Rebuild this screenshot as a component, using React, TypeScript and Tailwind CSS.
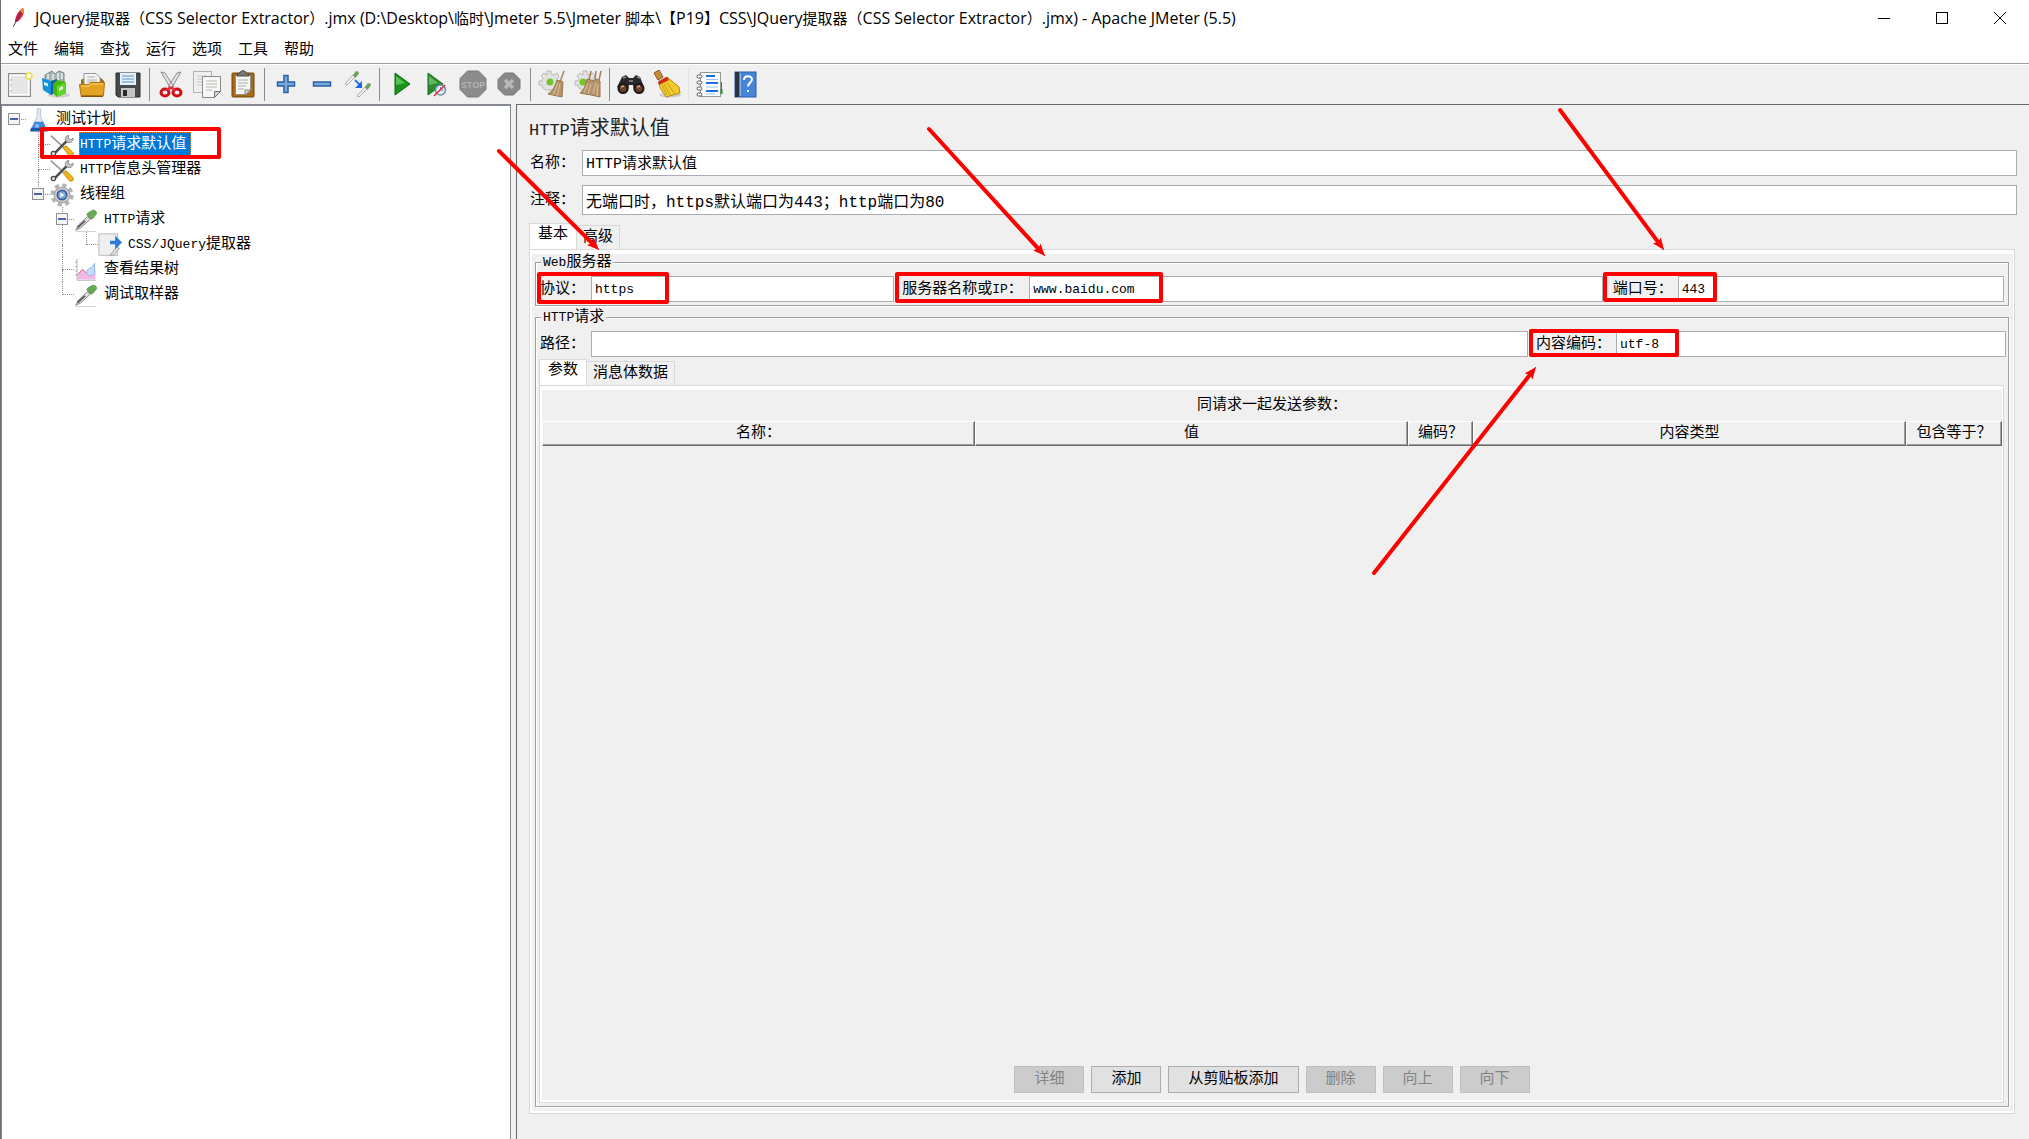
import { useState, type ReactNode } from "react";
import clsx from "clsx";

// Latin runs get their own size beside the CJK glyphs around them
function Mixed({ text, latin = "text-[13px]" }: { text: string; latin?: string }) {
  return (
    <>
      {text.split(/([ -~]+)/).map((part, i) =>
        /^[ -~]+$/.test(part) ? (
          <span key={i} className={latin}>
            {part}
          </span>
        ) : (
          part
        )
      )}
    </>
  );
}

function Icon({ children, size = 28 }: { children: ReactNode; size?: number }) {
  return (
    <svg width={size} height={size} viewBox="0 0 28 28" fill="none" aria-hidden="true" className="shrink-0">
      {children}
    </svg>
  );
}

const NewIcon = () => (
  <Icon>
    <rect x="2.5" y="3.5" width="22" height="23" fill="#e6e6e6" stroke="#8c8c84" />
    <rect x="4.500" y="5.500" width="18" height="19" stroke="#fff" />
    <path d="M5 9v2M5 14v2M5 20v2" stroke="#aaa" />
    <circle cx="23" cy="6" r="3" fill="#fffbe0" stroke="#f0dc50" strokeWidth="1.500" />
  </Icon>
);

const TemplatesIcon = () => (
  <Icon>
    <ellipse cx="17" cy="25" rx="11" ry="2.500" fill="#000" opacity=".15" />
    <path d="M3 5l7-4 3 3 4-3 5 2v9H3z" fill="#aab4b6" stroke="#7c8688" />
    <path d="M6 4v5M11 4v6M16 3v7M20 3v6" stroke="#e6ecec" strokeWidth="1.500" />
    <path d="M0 8l9 3v14l-8-5z" fill="#1790d8" />
    <path d="M9 11l6-2v12l-6 4z" fill="#0a62a8" />
    <path d="M2 12l4 1.500v3L2 15z" fill="#d9f0ff" />
    <path d="M11 14l4-4 9 2v11l-9 4-4-4z" fill="#44b512" />
    <path d="M15 16l9-4v11l-9 4z" fill="#62d321" />
    <path d="M17 18l4-2v3l-4 2z" fill="#e3ffd0" />
  </Icon>
);

const OpenIcon = () => (
  <Icon>
    <path d="M3 10l3-2h17l3 3v14H3z" fill="#a3690b" />
    <path d="M6 3.500h12l4 4V17H6z" fill="#f5f5f5" stroke="#999" />
    <path d="M9 7h8M9 10h10M9 12h10" stroke="#aaa" />
    <path d="M1.500 14.500h9l2-2h14l-1 13H3z" fill="#e2a422" stroke="#b17510" />
    <path d="M3 16h8l2-2h12" stroke="#f8d170" />
    <path d="M3 26.500h22" stroke="#815407" />
  </Icon>
);

const SaveIcon = () => (
  <Icon>
    <path d="M2 3h24v24H4l-2-2z" fill="#48494c" stroke="#2c2c2e" />
    <rect x="6" y="3" width="16" height="12" fill="#e6f0f8" />
    <path d="M8 6h12M8 9h12M8 12h12" stroke="#86b1d6" strokeWidth="1.500" />
    <rect x="7" y="18" width="14" height="9" fill="#c4c4c4" />
    <rect x="9" y="20" width="4" height="6" fill="#27272a" />
  </Icon>
);

const CutIcon = () => (
  <Icon>
    <path d="M4 2l4 1 9 14-3 2zM24 2l-4 1-9 14 3 2z" fill="#e2e2e2" stroke="#8d8d8d" />
    <ellipse cx="8" cy="22.500" rx="4" ry="3.500" stroke="#d01018" strokeWidth="3" />
    <ellipse cx="20" cy="22.500" rx="4" ry="3.500" stroke="#d01018" strokeWidth="3" />
    <path d="M9 19l5-3 5 3-2 2-3-2-3 2z" fill="#e4333a" />
  </Icon>
);

const CopyIcon = () => (
  <Icon>
    <path d="M.5 1.500h18v21H.5z" fill="#efefef" stroke="#b0b0b0" />
    <path d="M4 6h10M4 9h6M4 12h6M4 15h6" stroke="#c6c6c6" />
    <path d="M9.500 6.500h18v15l-6 6h-12z" fill="#f7f7f5" stroke="#8b8b88" />
    <path d="M13 11h11M13 14h11M13 17h11M13 20h6" stroke="#b9b9b9" />
    <path d="M21.500 27.500v-6h6z" fill="#d2d2ce" stroke="#777" />
  </Icon>
);

const PasteIcon = () => (
  <Icon>
    <rect x="3" y="3" width="22" height="24" rx="1" fill="#a96812" stroke="#764606" />
    <path d="M6.500 5.500h15v14l-4 5h-11z" fill="#f6f6f4" stroke="#8f8f8c" />
    <path d="M9 10h10M9 13h10M9 16h8M9 19h6" stroke="#aaa" />
    <path d="M16 25v-5h6z" fill="#d3d3d0" stroke="#888" />
    <path d="M8 6V4l3-1c0-3 6-3 6 0l3 1v2z" fill="#777772" stroke="#474743" />
  </Icon>
);

const PlusIcon = () => (
  <Icon>
    <path d="M12 5.500h4v6.500h6.500v4H16v6.500h-4V16H5.500v-4H12z" fill="#76a9dc" stroke="#2b5fa3" strokeWidth="1.500" />
  </Icon>
);

const MinusIcon = () => (
  <Icon>
    <rect x="5.500" y="12" width="17" height="4" fill="#76a9dc" stroke="#2b5fa3" strokeWidth="1.500" />
  </Icon>
);

const ToggleIcon = () => (
  <Icon>
    <path d="M1 14l8-9 2 2-8 8z" fill="#f4f4f4" stroke="#aaa" />
    <path d="M9 5l3-4 3 1-1 3-3 3z" fill="#6aa257" />
    <path d="M13 26l8-9 2 2-8 8z" fill="#f4f4f4" stroke="#aaa" />
    <path d="M21 17l3-4 3 1-1 3-3 3z" fill="#6aa257" />
    <path d="M11 10l5 5" stroke="#2a7bea" strokeWidth="2" />
    <path d="M18 11v7h-7z" fill="#1769e0" />
  </Icon>
);

const StartIcon = () => (
  <Icon>
    <path d="M8 3l15 11L8 25z" fill="#15951b" stroke="#0a6b10" />
    <path d="M9 6l9 7-9 2z" fill="#54c254" />
  </Icon>
);

const StartNoTimersIcon = () => (
  <Icon>
    <path d="M5 3l15 11L5 25z" fill="#2d8a30" stroke="#176e1c" />
    <path d="M6 6l9 7-9 2z" fill="#65b765" />
    <circle cx="17.500" cy="20" r="5" fill="#e6eef8" stroke="#6a8db8" strokeWidth="1.500" />
    <path d="M17.500 17v3h3" stroke="#6a8db8" />
    <path d="M11 26l11-11" stroke="#e02a2a" strokeWidth="1.500" />
  </Icon>
);

const StopIcon = () => (
  <Icon>
    <path d="M8.500 1h11L27 8.500v11L19.500 27h-11L1 19.500v-11z" fill="#8c8c8c" stroke="#7b7b7b" />
    <text x="14" y="18" textAnchor="middle" fontSize="9" fontWeight="700" fill="#b4b4b4" stroke="none" fontFamily="Liberation Sans, sans-serif">
      STOP
    </text>
  </Icon>
);

const ShutdownIcon = () => (
  <Icon>
    <path d="M9.500 3h9l6.500 6.500v9L18.500 25h-9L3 18.500v-9z" fill="#888" stroke="#777" />
    <path d="M10 10l8 8M18 10l-8 8" stroke="#b9b9b9" strokeWidth="3.500" />
  </Icon>
);

const gearTeeth = "M9 1h4v3l3 1 3-2 2 3-2 3 1 2h3v4h-3l-1 3-3 2H8l-3-2-1-3H1v-4h3l1-3-2-2 3-3 3 2z";

const ClearIcon = () => (
  <Icon>
    <path d={gearTeeth} fill="#e2e2e2" stroke="#b9b9b9" />
    <circle cx="12" cy="12" r="3.500" fill="#74c42e" />
    <path d="M26 1l-4 11" stroke="#a1805c" strokeWidth="1.500" />
    <path d="M19 10l6 2-1 15-14-3c5-3 7-8 9-14z" fill="#b6946b" stroke="#96754e" />
    <path d="M20 13l-5 12M22 14l-3 12" stroke="#dcc19a" />
  </Icon>
);

const ClearAllIcon = () => (
  <Icon>
    <path d={gearTeeth} fill="#e2e2e2" stroke="#b9b9b9" />
    <circle cx="9" cy="12" r="3.500" fill="#74c42e" />
    <path d="M17 1l-2 9M22 1l-1 9M27 1l-2 9" stroke="#a1805c" strokeWidth="1.500" />
    <path d="M13 9l4 1 3 1 3-2 3 2v16l-9-2-11-2c4-3 6-8 7-14z" fill="#b6946b" stroke="#96754e" />
    <path d="M14 13l-4 10M17 14l-3 10M22 13l-3 11M24 14l-1 12" stroke="#dcc19a" />
  </Icon>
);

const SearchIcon = () => (
  <Icon>
    <path d="M5 7l4-2 3 3h4l3-3 4 2 4 10-5 4h-5l-1-6h-4l-1 6H6l-6-4z" fill="#29292c" />
    <path d="M6 8l3-1M20 7l3 1" stroke="#8a8a8e" strokeWidth="1.500" />
    <circle cx="6" cy="18.500" r="4.500" fill="#6b3f29" stroke="#1a1a1c" strokeWidth="2" />
    <circle cx="22" cy="18.500" r="4.500" fill="#6b3f29" stroke="#1a1a1c" strokeWidth="2" />
    <path d="M4 17l3-1M20 17l3-1" stroke="#d7a583" strokeWidth="1.500" />
    <path d="M12 11h4" stroke="#77777a" strokeWidth="2" />
  </Icon>
);

const BroomIcon = () => (
  <Icon>
    <ellipse cx="17" cy="25" rx="11" ry="2.500" fill="#000" opacity=".15" />
    <path d="M1 3l5-3 4 7-5 3z" fill="#c88a3c" stroke="#8c571a" />
    <path d="M6 11l8-4 12 10 1 6-14 4c-2-5-7-7-7-16z" fill="#f3cb2c" stroke="#b88a10" />
    <path d="M11 14l6 11M14 13l8 11M9 15l5 10" stroke="#c79a14" />
    <path d="M5 12l9-5 2 3-10 5z" fill="#d3261f" />
  </Icon>
);

const LogIcon = () => (
  <Icon>
    <rect x="4.500" y="2.500" width="20" height="24" fill="#fff" stroke="#999" />
    <path d="M25.500 12v7" stroke="#2762c7" />
    <path d="M25.500 19v5" stroke="#31912f" strokeWidth="2" />
    <path d="M10 6h9M10 13h12M10 21h12" stroke="#1b6bea" strokeWidth="2" />
    <path d="M10 9.500h12M10 17h12M10 24h9" stroke="#9cc1f3" />
    {[6, 12, 18, 24].map((y) => (
      <rect key={y} x="1" y={y - 1} width="5" height="3" rx="1.500" fill="#fff" stroke="#555" />
    ))}
  </Icon>
);

const HelpIcon = () => (
  <Icon>
    <rect x="3" y="2" width="21" height="25" fill="#4684d8" stroke="#2a5ca8" />
    <rect x="3" y="2" width="4" height="25" fill="#2c3440" />
    <path d="M8.500 3v23" stroke="#8ab6ee" />
    <path d="M12 10c0-5 8-5 8-.5 0 3-4 3-4 7" stroke="#fff" strokeWidth="2" />
    <rect x="15" y="20" width="2" height="2" fill="#fff" />
  </Icon>
);

const FlaskIcon = () => (
  <Icon size={24}>
    <path d="M13 1h4v9l8 17H5l8-17z" fill="#e3e9ee" stroke="#b5bec6" />
    <path d="M10 16h10l5 11H5z" fill="#3b8ade" />
    <path d="M6 23h18l1 4H5z" fill="#165ba9" />
    <path d="M11 19h4v4h-4z" fill="#8cc0f4" />
  </Icon>
);

const ToolsIcon = () => (
  <Icon size={24}>
    <path d="M1 3l14 13" stroke="#9a9a9a" strokeWidth="2" />
    <path d="M15 17l4-2 8 8c1 4-2 5-5 3z" fill="#f0b51c" stroke="#bb8508" />
    <path d="M5 24L20 9" stroke="#4e4e4e" strokeWidth="3" />
    <path d="M18 9c-1-4 1-6 4-6l-1 3 3 2 3-2c0 4-3 6-6 5z" fill="#c7c7c7" stroke="#7d7d7d" />
    <circle cx="4" cy="24" r="2.500" fill="#e0e0e0" stroke="#4b4b4b" strokeWidth="1.500" />
  </Icon>
);

const GearIcon = () => (
  <Icon size={24}>
    <circle cx="14" cy="14" r="11.500" stroke="#b4b4b4" strokeWidth="4" strokeDasharray="5 4.030" />
    <circle cx="14" cy="14" r="9" fill="#d8d8d8" stroke="#adadad" strokeWidth="2" />
    <circle cx="14" cy="14" r="5.500" fill="#7ea6d6" stroke="#3c629c" strokeWidth="2" />
    <path d="M12 11l5 3-5 3z" fill="#fff" />
  </Icon>
);

const DropperIcon = () => (
  <Icon size={24}>
    <path d="M2 27.500h24" stroke="#c9c9c9" />
    <path d="M2 26l3-6L16 10l3 3L8 23z" fill="#dedede" stroke="#777" />
    <path d="M4 23l9-8" stroke="#555" strokeWidth="2" />
    <path d="M15 8l5 5 2-1 4-5c1-4-3-5-5-4l-5 3z" fill="#69a855" stroke="#5a9649" />
  </Icon>
);

const ExtractorIcon = () => (
  <Icon size={24}>
    <rect x="1" y="1" width="22" height="25" fill="#efefef" stroke="#b5b5b5" />
    <path d="M14 26l8-10 3 2-7 8z" fill="#e0e0e0" stroke="#999" />
    <path d="M14 9h6V3l8 8-8 8v-6h-6z" fill="#2d7bd3" />
  </Icon>
);

const GraphIcon = () => (
  <Icon size={24}>
    <path d="M3.500 1v25h22" stroke="#aaa" />
    <path d="M1 5h3M1 10h3M1 15h3M1 20h3" stroke="#aaa" />
    <path d="M4 20l6-7 6 6 9-6v12H4z" fill="#f2b7e2" />
    <path d="M4 20l6-7 6 6" stroke="#c24b74" />
    <path d="M15 18c-1-5 3-6 6-7l3-5v12c-3 3-7 4-9 0z" fill="#c5dcf7" stroke="#8ab2e2" />
  </Icon>
);

const FeatherIcon = () => (
  <svg width="12" height="20" viewBox="0 0 12 20" aria-hidden="true">
    <path d="M2 14C2 8 6 2 10 0c2 4 0 10-6 14z" fill="#cf2340" />
    <path d="M7 3c1-2 2-3 3-3 1 2 1 4 0 6z" fill="#f28a1c" />
    <path d="M8 4L0 19" stroke="#6c2370" />
  </svg>
);

const toolbar = [
  [
    { label: "新建", icon: <NewIcon /> },
    { label: "模板", icon: <TemplatesIcon /> },
    { label: "打开", icon: <OpenIcon /> },
    { label: "保存", icon: <SaveIcon /> },
  ],
  [
    { label: "剪切", icon: <CutIcon /> },
    { label: "复制", icon: <CopyIcon /> },
    { label: "粘贴", icon: <PasteIcon /> },
  ],
  [
    { label: "全部展开", icon: <PlusIcon /> },
    { label: "全部折叠", icon: <MinusIcon /> },
    { label: "切换", icon: <ToggleIcon /> },
  ],
  [
    { label: "启动", icon: <StartIcon /> },
    { label: "不停顿开始", icon: <StartNoTimersIcon /> },
    { label: "停止", icon: <StopIcon /> },
    { label: "关闭", icon: <ShutdownIcon /> },
  ],
  [
    { label: "清除", icon: <ClearIcon /> },
    { label: "清除全部", icon: <ClearAllIcon /> },
  ],
  [
    { label: "查找", icon: <SearchIcon /> },
    { label: "重置搜索", icon: <BroomIcon /> },
  ],
  [
    { label: "函数助手", icon: <LogIcon /> },
    { label: "帮助", icon: <HelpIcon /> },
  ],
];

type Guide = "blank" | "pipe" | "tee" | "ell" | "root" | "last" | "node";

const tree: { label: string; icon: ReactNode; guides: Guide[] }[] = [
  { label: "测试计划", icon: <FlaskIcon />, guides: ["root"] },
  { label: "HTTP请求默认值", icon: <ToolsIcon />, guides: ["blank", "tee"] },
  { label: "HTTP信息头管理器", icon: <ToolsIcon />, guides: ["blank", "tee"] },
  { label: "线程组", icon: <GearIcon />, guides: ["blank", "last"] },
  { label: "HTTP请求", icon: <DropperIcon />, guides: ["blank", "blank", "node"] },
  { label: "CSS/JQuery提取器", icon: <ExtractorIcon />, guides: ["blank", "blank", "pipe", "ell"] },
  { label: "查看结果树", icon: <GraphIcon />, guides: ["blank", "blank", "tee"] },
  { label: "调试取样器", icon: <DropperIcon />, guides: ["blank", "blank", "ell"] },
];

function GuideCell({ type }: { type: Guide }) {
  const up = type !== "blank" && type !== "root";
  const down = type === "pipe" || type === "tee" || type === "node";
  const across = type !== "blank" && type !== "pipe";
  const handle = type === "root" || type === "last" || type === "node";
  return (
    <span className="relative flex w-6 self-stretch pl-3">
      <span className="flex flex-1 flex-col">
        <span className={clsx("h-[13px] border-dotted border-[#909090]", up && "border-l", across && "border-b")} />
        <span className={clsx("flex-1 border-dotted border-[#909090]", down && "border-l")} />
      </span>
      {handle && (
        <button
          aria-label="折叠"
          className="absolute left-1.5 top-1.5 flex h-3 w-3 items-center justify-center border border-[#919191] bg-[#f4f4f4]"
        >
          <span className="h-0.5 w-2 bg-[#4b63a7]" />
        </button>
      )}
    </span>
  );
}

function TestPlanTree() {
  const [selected, setSelected] = useState("HTTP请求默认值");
  return (
    <nav className="w-[510px] shrink-0 border-x border-t-2 border-[#828790] bg-white pt-px">
      <ul>
        {tree.map(({ label, icon, guides }, i) => (
          <li key={i} className="flex h-[25px] items-center">
            {guides.map((g, n) => (
              <GuideCell key={n} type={g} />
            ))}
            {icon}
            <button
              onClick={() => setSelected(label)}
              className={clsx(
                "ml-[5px] h-[25px] whitespace-nowrap border border-dotted pr-1 leading-[23px]",
                label === selected ? "border-[#ff8728] bg-[#0078d7] text-white" : "border-transparent"
              )}
            >
              <Mixed text={label} />
            </button>
          </li>
        ))}
      </ul>
    </nav>
  );
}

function Field({
  id,
  label,
  value = "",
  className,
  labelClass,
  inputClass = "h-[26px] text-[13px]",
}: {
  id: string;
  label: string;
  value?: string;
  className?: string;
  labelClass?: string;
  inputClass?: string;
}) {
  return (
    <div className={clsx("flex items-center", className)}>
      <label htmlFor={id} className={clsx("shrink-0 whitespace-nowrap pt-0.5", labelClass)}>
        <Mixed text={label} />
      </label>
      <input
        id={id}
        defaultValue={value}
        className={clsx("w-0 min-w-0 flex-1 border border-[#abadb3] bg-white pl-[3px] outline-none", inputClass)}
      />
    </div>
  );
}

function Tabs({ tabs, children, className }: { tabs: string[]; children: ReactNode; className?: string }) {
  const [active, setActive] = useState(tabs[0]);
  return (
    <div className={clsx("flex flex-col", className)}>
      <div role="tablist" className="flex items-end">
        {tabs.map((tab) => (
          <button
            key={tab}
            role="tab"
            aria-selected={tab === active}
            onClick={() => setActive(tab)}
            className={clsx(
              "border border-b-0 border-[#d9d9d9]",
              tab === active ? "-mb-px h-[27px] bg-white px-2 pb-1 leading-[22px]" : "h-6 border-l-0 bg-[#f0f0f0] px-[6px] leading-[22px]"
            )}
          >
            {tab}
          </button>
        ))}
      </div>
      <div className="flex flex-1 flex-col border border-[#d9d9d9] bg-white pb-0.5 pl-0.5 pr-px pt-1">
        <div className="flex flex-1 flex-col bg-[#f0f0f0]">{children}</div>
      </div>
    </div>
  );
}

function Group({ title, children, className }: { title: string; children: ReactNode; className?: string }) {
  return (
    <fieldset
      className={clsx(
        "min-w-0 border border-[#a0a0a0] pb-[3px] pt-[5px] shadow-[1px_1px_0_#fff,inset_1px_1px_0_#fff]",
        className
      )}
    >
      <legend className="ml-[5px] bg-[#f0f0f0] px-0.5 pt-px leading-4">
        <Mixed text={title} />
      </legend>
      {children}
    </fieldset>
  );
}

const columns = [
  { label: "名称：" },
  { label: "值" },
  { label: "编码？", width: "w-[65px]" },
  { label: "内容类型" },
  { label: "包含等于？", width: "w-[96px]" },
];

const actions = [
  { label: "详细", disabled: true },
  { label: "添加", disabled: false },
  { label: "从剪贴板添加", disabled: false },
  { label: "删除", disabled: true },
  { label: "向上", disabled: true },
  { label: "向下", disabled: true },
];

function ParameterTable() {
  return (
    <>
      <p className="pb-1 pt-[5px] text-center leading-[22px]">同请求一起发送参数：</p>
      <table className="w-full table-fixed border-separate border-spacing-0">
        <thead>
          <tr>
            {columns.map(({ label, width }) => (
              <th
                key={label}
                className={clsx(
                  "h-[25px] whitespace-nowrap border-b border-l border-r border-t border-b-[#696969] border-l-white border-r-[#696969] border-t-white p-0 text-center font-normal leading-[22px] shadow-[inset_-1px_-1px_0_#a0a0a0]",
                  width
                )}
              >
                {label}
              </th>
            ))}
          </tr>
        </thead>
      </table>
      <div className="mt-auto flex justify-center gap-[7px] pb-[7px]">
        {actions.map(({ label, disabled }) => (
          <button
            key={label}
            disabled={disabled}
            className="h-[27px] border border-[#adadad] bg-[#e1e1e1] px-[19px] leading-6 disabled:border-[#bfbfbf] disabled:bg-[#cccccc] disabled:text-[#838383]"
          >
            {label}
          </button>
        ))}
      </div>
    </>
  );
}

const highlights = [
  { x: 41, y: 129, w: 177, h: 28 },
  { x: 538, y: 274, w: 128, h: 28 },
  { x: 896, y: 274, w: 264, h: 27 },
  { x: 1604, y: 274, w: 110, h: 26 },
  { x: 1530, y: 331, w: 146, h: 24 },
];

const arrows = [
  { from: [498, 151], to: [598, 250] },
  { from: [928, 129], to: [1044, 256] },
  { from: [1559, 110], to: [1663, 250] },
  { from: [1373, 573], to: [1535, 367] },
];

// Red marks drawn over the window
function Annotations() {
  return (
    <svg className="pointer-events-none absolute left-0 top-0 h-full w-full" stroke="#fe0000" strokeWidth="4" fill="none" aria-hidden="true">
      <defs>
        <marker id="head" markerUnits="userSpaceOnUse" markerWidth="14" markerHeight="12" refX="12" refY="5" orient="auto">
          <path d="M0 0l12 5-12 5 2-5z" fill="#fe0000" stroke="none" />
        </marker>
      </defs>
      {highlights.map(({ x, y, w, h }) => (
        <rect key={x} x={x} y={y} width={w} height={h} strokeLinejoin="round" />
      ))}
      {arrows.map(({ from, to }) => {
        const len = Math.hypot(to[0] - from[0], to[1] - from[1]);
        const t = (len - 8) / len;
        return (
          <g key={from[0]}>
            <line
              x1={from[0]}
              y1={from[1]}
              x2={from[0] + (to[0] - from[0]) * t}
              y2={from[1] + (to[1] - from[1]) * t}
              strokeLinecap="round"
            />
            <line x1={from[0]} y1={from[1]} x2={to[0]} y2={to[1]} strokeWidth="1" markerEnd="url(#head)" />
          </g>
        );
      })}
    </svg>
  );
}

const title =
  "JQuery提取器（CSS Selector Extractor）.jmx (D:\\Desktop\\临时\\Jmeter 5.5\\Jmeter 脚本\\【P19】CSS\\JQuery提取器（CSS Selector Extractor）.jmx) - Apache JMeter (5.5)";

export default function App() {
  return (
    <div className="relative flex min-h-screen flex-col border-l border-[#6f6f6f] bg-[#f0f0f0] font-['Liberation_Mono','Noto_Sans_CJK_SC',monospace] text-[15px] text-black">
      <header className="flex h-9 items-center bg-white pl-3 font-['Open_Sans','Noto_Sans_CJK_SC',sans-serif]">
        <FeatherIcon />
        <h1 className="ml-2.5 flex-1 whitespace-nowrap text-[15px] leading-6">
          <Mixed text={title} latin="text-[16px]" />
        </h1>
        <div className="flex">
          <button aria-label="最小化" className="flex h-9 w-[58px] items-center justify-center">
            <span className="h-px w-3 bg-black" />
          </button>
          <button aria-label="最大化" className="flex h-9 w-[58px] items-center justify-center">
            <span className="h-3 w-3 border border-black" />
          </button>
          <button aria-label="关闭窗口" className="flex h-9 w-[58px] items-center justify-center">
            <svg width="12" height="12" viewBox="0 0 12 12" stroke="#000">
              <path d="M0 0l12 12M12 0L0 12" />
            </svg>
          </button>
        </div>
      </header>

      <nav className="flex h-[27px] items-center gap-4 bg-white pl-[7px] pt-0.5">
        {["文件", "编辑", "查找", "运行", "选项", "工具", "帮助"].map((item) => (
          <button key={item} className="leading-6">
            {item}
          </button>
        ))}
      </nav>

      <div role="toolbar" className="flex h-[41px] items-center border-t border-[#a0a0a0] pl-px shadow-[inset_0_1px_0_#fff]">
        {toolbar.map((group, i) => (
          <div key={i} className="flex items-center">
            {i > 0 && <span className={clsx("mx-[3px] h-[33px] w-px", i === 6 ? "bg-[#e4e4e4]" : "bg-[#8c8c8c]")} />}
            {group.map(({ label, icon }) => (
              <button key={label} aria-label={label} className="flex h-9 w-9 items-center justify-center">
                {icon}
              </button>
            ))}
          </div>
        ))}
      </div>

      <div className="flex flex-1 gap-[5px]">
        <TestPlanTree />
        <main className="flex min-w-0 flex-1 flex-col border-l border-t border-[#696969] pb-[25px] pl-3 pr-3">
          <h2 className="mt-2.5 text-xl leading-[30px] text-[#222]">
            <Mixed text="HTTP请求默认值" latin="text-[17px]" />
          </h2>
          <Field id="name" label="名称：" value="HTTP请求默认值" className="mt-1" labelClass="w-[53px] pl-px" inputClass="h-[26px] pb-0.5 text-[15px]" />
          <Field
            id="comment"
            label="注释："
            value="无端口时，https默认端口为443；http端口为80"
            className="mt-[9px]"
            labelClass="w-[53px] pl-px"
            inputClass="h-[30px] text-base"
          />
          <Tabs tabs={["基本", "高级"]} className="mr-0.5 mt-2 flex-1">
            <Group title="Web服务器" className="ml-[3px] mr-1">
              <div className="flex pl-1 pr-1">
                <Field id="protocol" label="协议：" value="https" className="flex-[354]" labelClass="w-[51px]" />
                <Field id="server" label="服务器名称或IP：" value="www.baidu.com" className="flex-[708]" labelClass="w-[135px] pl-2" />
                <Field id="port" label="端口号：" value="443" className="flex-[401]" labelClass="w-[75px] pl-2.5" />
              </div>
            </Group>
            <Group title="HTTP请求" className="mb-1 ml-[3px] mr-1 mt-[3px] flex flex-1 flex-col">
              <div className="flex pl-1 pr-0.5">
                <Field id="path" label="路径：" className="flex-[988]" labelClass="w-[51px]" />
                <Field id="encoding" label="内容编码：" value="utf-8" className="flex-[478]" labelClass="w-[88px] pl-2" />
              </div>
              <Tabs tabs={["参数", "消息体数据"]} className="ml-[3px] mr-1 mt-0.5 flex-1">
                <ParameterTable />
              </Tabs>
            </Group>
          </Tabs>
        </main>
      </div>

      <Annotations />
    </div>
  );
}
